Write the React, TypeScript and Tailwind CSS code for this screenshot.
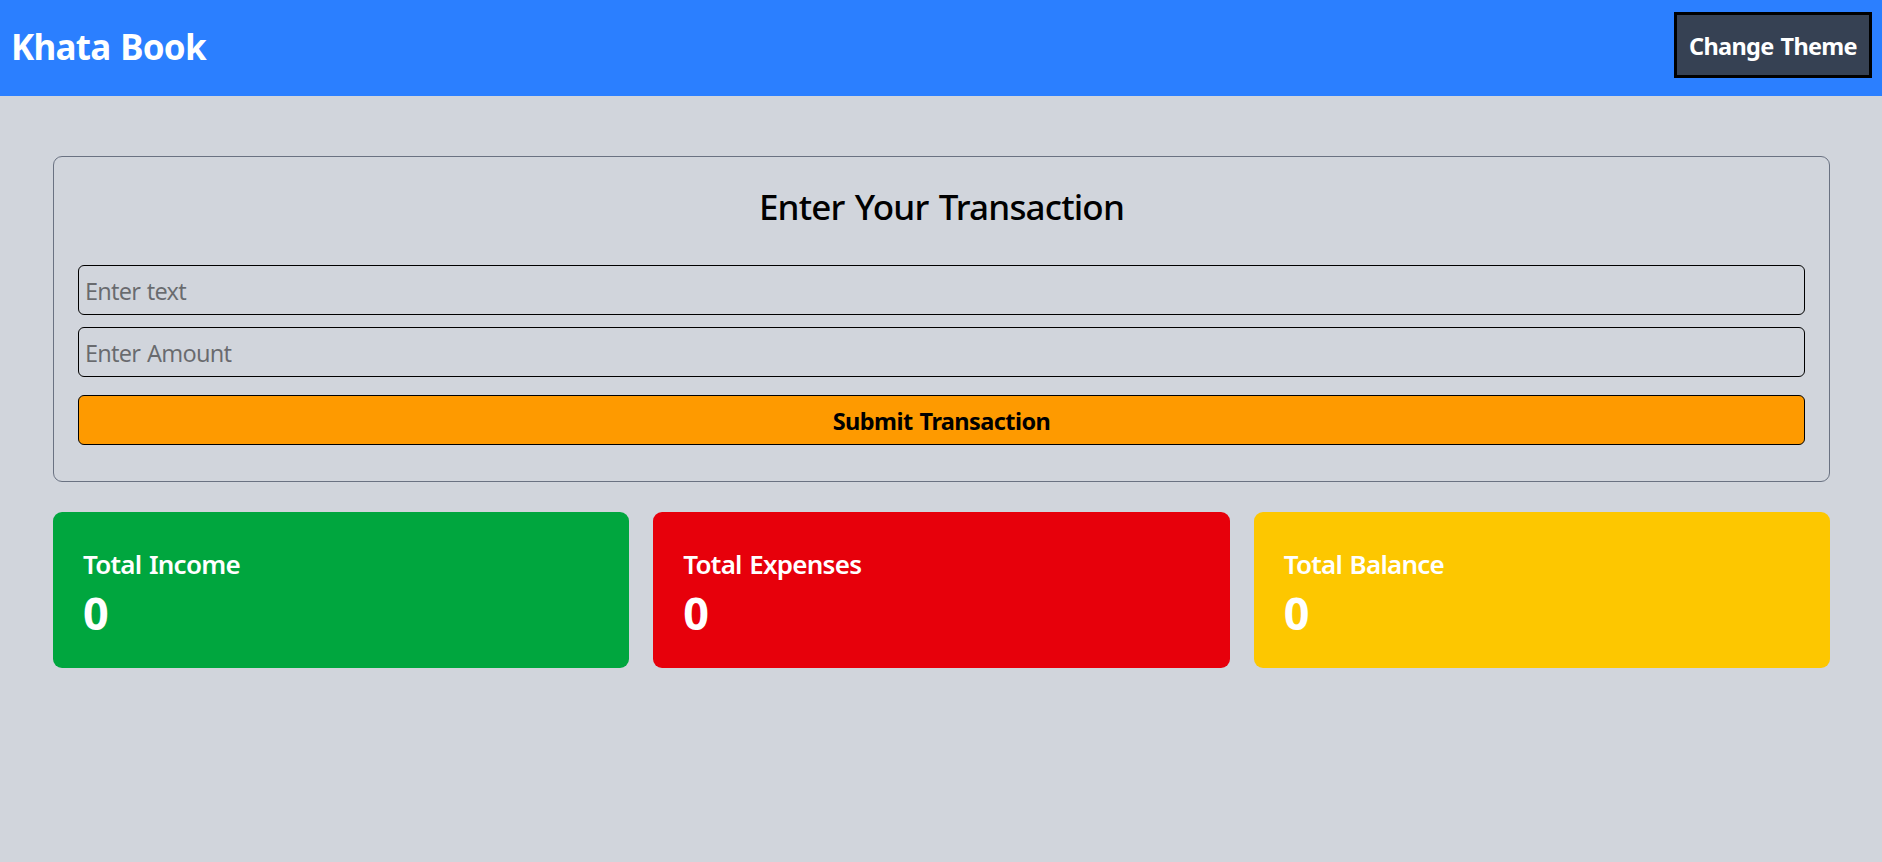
import React, { useState } from "react";

const fieldClass =
  "block h-[50px] w-full rounded-md border border-black bg-transparent pt-0.5 pr-[5px] pl-1.5 text-[23.5px] text-black outline-none";

type Summary = { title: string; value: number; color: string; tracking: string };

const summaries: Summary[] = [
  { title: "Total Income", value: 0, color: "bg-green-600", tracking: "tracking-[-0.75px]" },
  { title: "Total Expenses", value: 0, color: "bg-red-600", tracking: "tracking-[-0.75px]" },
  { title: "Total Balance", value: 0, color: "bg-yellow-400", tracking: "tracking-[-0.75px]" },
];

function Header() {
  return (
    <header className="flex h-24 items-start justify-between bg-blue-500 pt-3 pr-2.5 pl-[11px] text-white">
      <h1 className="text-[35px] leading-[69px] font-bold tracking-[-0.75px] [word-spacing:1.5px]">Khata Book</h1>
      <button
        type="button"
        className="h-[66px] w-[198px] border-3 border-black bg-gray-700 pt-1 text-[23.5px] font-bold tracking-[-0.68px] [word-spacing:1.5px] whitespace-nowrap"
      >
        Change Theme
      </button>
    </header>
  );
}

function TransactionForm() {
  const [text, setText] = useState("");
  const [amount, setAmount] = useState("");
  return (
    <section className="h-[326px] rounded-[9px] border border-gray-500 px-6 pt-7">
      <h2 className="text-center text-[35px] leading-[44px] font-medium tracking-[-0.82px] text-black [word-spacing:2px]">
        Enter Your Transaction
      </h2>
      <form className="mt-9" onSubmit={(e) => e.preventDefault()}>
        <input
          className={`${fieldClass} tracking-[-0.8px] [word-spacing:1.5px]`}
          placeholder="Enter text"
          value={text}
          onChange={(e) => setText(e.target.value)}
        />
        <input
          className={`${fieldClass} mt-3 tracking-[-0.76px] [word-spacing:1.5px]`}
          placeholder="Enter Amount"
          value={amount}
          onChange={(e) => setAmount(e.target.value)}
        />
        <button
          type="submit"
          className="mt-[18px] block h-[50px] w-full rounded-md border border-black bg-amber-500 pt-1 text-[23.5px] font-bold tracking-[-0.57px] text-black [word-spacing:1.5px]"
        >
          Submit Transaction
        </button>
      </form>
    </section>
  );
}

function SummaryCard({ title, value, color, tracking }: Summary) {
  return (
    <div className={`h-[156px] rounded-[9px] px-[30px] pt-[34px] text-white ${color}`}>
      <h3 className={`text-[26px] leading-9 font-semibold [word-spacing:1.5px] ${tracking}`}>{title}</h3>
      <p className="mt-[7px] text-[45px] leading-[48px] font-bold">{value}</p>
    </div>
  );
}

export default function App() {
  return (
    <div className="min-h-screen bg-gray-300 font-['Noto_Sans','Open_Sans',sans-serif]">
      <Header />
      <main className="pt-[60px] pr-[52px] pl-[53px]">
        <TransactionForm />
        <div className="mt-[30px] grid grid-cols-3 gap-6">
          {summaries.map((s) => (
            <SummaryCard key={s.title} {...s} />
          ))}
        </div>
      </main>
    </div>
  );
}
